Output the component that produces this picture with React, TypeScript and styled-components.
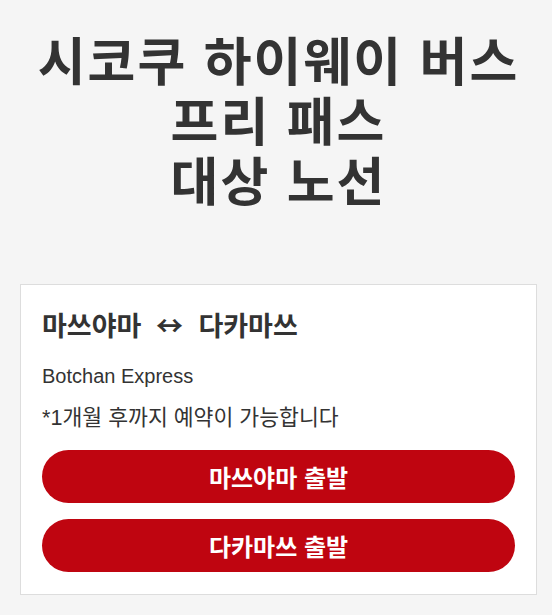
import React from "react";
import styled, { createGlobalStyle } from "styled-components";

const GlobalStyle = createGlobalStyle`
  body {
    margin: 0;
    background-color: #f5f5f5;
    font-family: "Liberation Sans", "Noto Sans CJK KR", sans-serif;
    color: #333;
  }
`;

const Page = styled.div`
  padding: 33px 15px 20px 20px;
`;

const Title = styled.h1`
  margin: 0 0 71px;
  font-size: 52px;
  line-height: 60px;
  letter-spacing: 2px;
  font-weight: 700;
  text-align: center;
  color: #333;
`;

const Card = styled.div`
  background-color: #fff;
  border: 1px solid #ddd;
  padding: 24px 21px 22px;
`;

const RouteTitle = styled.h2`
  margin: 0 0 20px;
  font-size: 27px;
  line-height: 32px;
  font-weight: 700;
  color: #333;
`;

const Arrow = styled.span`
  font-family: "Noto Sans CJK KR", sans-serif;
  margin: 0 8px 0 7px;
`;

const Operator = styled.p`
  margin: 0 0 16px;
  font-size: 20px;
  line-height: 26px;
`;

const Note = styled.p`
  margin: 0 0 19px;
  font-size: 21.6px;
  line-height: 26px;
`;

const ButtonList = styled.div`
  display: flex;
  flex-direction: column;
  gap: 16px;
`;

const DepartButton = styled.button`
  display: block;
  width: 100%;
  height: 53px;
  border: none;
  border-radius: 27px;
  background-color: #bf0510;
  color: #fff;
  font-family: inherit;
  font-size: 24px;
  font-weight: 700;
  cursor: pointer;
`;

const routes = ["마쓰야마 출발", "다카마쓰 출발"];

const App: React.FC = () => {
  return (
    <>
      <GlobalStyle />
      <Page>
        <Title>
          시코쿠 하이웨이 버스
          <br />
          프리 패스
          <br />
          대상 노선
        </Title>
        <Card>
          <RouteTitle>
            마쓰야마 <Arrow>↔</Arrow> 다카마쓰
          </RouteTitle>
          <Operator>Botchan Express</Operator>
          <Note>*1개월 후까지 예약이 가능합니다</Note>
          <ButtonList>
            {routes.map((label) => (
              <DepartButton key={label}>{label}</DepartButton>
            ))}
          </ButtonList>
        </Card>
      </Page>
    </>
  );
};

export default App;
